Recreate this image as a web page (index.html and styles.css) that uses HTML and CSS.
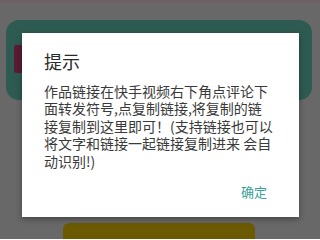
FILE: index.html
```html
<!DOCTYPE html>
<html lang="zh">
<head>
<meta charset="utf-8">
<link rel="stylesheet" href="styles.css">
</head>
<body>
<div class="app">
  <div class="topbar"></div>
  <div class="card"><div class="mark"></div></div>
  <div class="action"></div>
  <div class="dialog">
    <div class="title">提示</div>
    <div class="message">作品链接在快手视频右下角点评论下<br>面转发符号,点复制链接,将复制的链<br>接复制到这里即可！(支持链接也可以<br>将文字和链接一起链接复制进来 会自<br>动识别!)</div>
    <div class="footer"><span class="ok">确定</span></div>
  </div>
</div>
</body>
</html>
```
FILE: styles.css
```css
html, body {
  margin: 0;
  padding: 0;
}
body {
  width: 320px;
  height: 239px;
  overflow: hidden;
  font-family: "Noto Sans CJK SC", "Noto Sans", sans-serif;
}
.app {
  position: relative;
  width: 320px;
  height: 239px;
  background: #686868;
  overflow: hidden;
}
.topbar {
  height: 3px;
  background: #6f5f64;
}
.card {
  margin: 17px 8px 0 6px;
  height: 80px;
  border-radius: 13px;
  background: #2e5b51;
  padding: 25px 0 0 8px;
  box-sizing: border-box;
}
.mark {
  width: 10px;
  height: 28px;
  background: #5a1c33;
  border-radius: 2px;
}
.action {
  margin: 123px 0 0 63px;
  width: 192px;
  height: 20px;
  background: #6c5a02;
  border-radius: 6px 6px 0 0;
}
.dialog {
  position: absolute;
  left: 22px;
  top: 33px;
  width: 277px;
  height: 184px;
  box-sizing: border-box;
  background: #ffffff;
  padding: 16px 32px 0 22px;
  box-shadow: 0 2px 6px rgba(0,0,0,0.35);
}
.title {
  font-size: 18px;
  line-height: 24px;
  color: #2a2a2a;
}
.message {
  margin-top: 9.5px;
  font-size: 14px;
  line-height: 17.5px;
  color: #3a3a3a;
  white-space: nowrap;
}
.footer {
  display: flex;
  justify-content: flex-end;
  margin-top: 13.5px;
}
.ok {
  font-size: 13px;
  line-height: 16px;
  color: #3b9e9a;
}
```
